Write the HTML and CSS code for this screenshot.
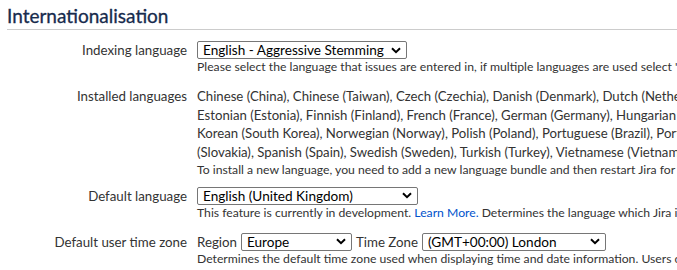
FILE: index.html
```html
<!DOCTYPE html>
<html lang="en">
<head>
<meta charset="utf-8">
<title>Internationalisation</title>
<link rel="stylesheet" href="styles.css">
</head>
<body>
<div class="page">
  <h2 class="section-title">Internationalisation</h2>
  <div class="form">
    <div class="row">
      <label class="label">Indexing language</label>
      <div class="field">
        <select class="select select-index"><option>English - Aggressive Stemming</option></select>
        <div class="desc">Please select the language that issues are entered in, if multiple languages are used select 'Other' to disable language specific stemming</div>
      </div>
    </div>
    <div class="row row-list">
      <div class="label">Installed languages</div>
      <div class="field">
        <div class="langs">Chinese (China), Chinese (Taiwan), Czech (Czechia), Danish (Denmark), Dutch (Netherlands), English (United Kingdom), English (United States),<br>Estonian (Estonia), Finnish (Finland), French (France), German (Germany), Hungarian (Hungary), Icelandic (Iceland), Italian (Italy), Japanese (Japan),<br>Korean (South Korea), Norwegian (Norway), Polish (Poland), Portuguese (Brazil), Portuguese (Portugal), Romanian (Romania), Russian (Russia), Slovak<br>(Slovakia), Spanish (Spain), Swedish (Sweden), Turkish (Turkey), Vietnamese (Vietnam)</div>
        <div class="desc">To install a new language, you need to add a new language bundle and then restart Jira for the changes to take effect.</div>
      </div>
    </div>
    <div class="row">
      <label class="label">Default language</label>
      <div class="field">
        <select class="select select-lang"><option>English (United Kingdom)</option></select>
        <div class="desc">This feature is currently in development. <a class="link" href="#">Learn More.</a> Determines the language which Jira is displayed in when a user has not set a language preference.</div>
      </div>
    </div>
    <div class="row">
      <div class="label">Default user time zone</div>
      <div class="field">
        <div class="tz">
          <span class="tz-label">Region</span>
          <select class="select select-region"><option>Europe</option></select>
          <span class="tz-label">Time Zone</span>
          <select class="select select-zone"><option>(GMT+00:00) London</option></select>
        </div>
        <div class="desc">Determines the default time zone used when displaying time and date information. Users can override this setting in their profile.</div>
      </div>
    </div>
  </div>
</div>
</body>
</html>
```
FILE: styles.css
```css
html, body {
  margin: 0;
  padding: 0;
  background: #fff;
  overflow: hidden;
}
body {
  font-family: Lato, "Open Sans", sans-serif;
  color: #333;
}
.page {
  width: 1100px;
  padding-left: 7px;
}
.section-title {
  margin: 0;
  padding: 6px 0 3px;
  font-size: 19px;
  line-height: 20px;
  font-weight: 400;
  color: #172b4d;
  border-bottom: 1px solid #ccc;
  -webkit-text-stroke: 0.3px #172b4d;
}
.form {
  padding-top: 11px;
}
.row {
  display: grid;
  grid-template-columns: 180px 1fr;
  column-gap: 10px;
  margin-bottom: 12px;
}
.row-list {
  margin-bottom: 9px;
}
.label {
  text-align: right;
  font-size: 13.3px;
  line-height: 18px;
  color: #333;
  white-space: nowrap;
}
.row-list .label {
  line-height: 18.67px;
}
.field {
  min-width: 0;
}
.langs {
  font-size: 13.2px;
  line-height: 18.67px;
  white-space: nowrap;
}
.desc {
  font-size: 12.2px;
  line-height: 16px;
  color: #333;
  white-space: nowrap;
}
.link {
  color: #0052cc;
  text-decoration: none;
}
.select {
  -webkit-appearance: none;
  appearance: none;
  display: block;
  height: 18px;
  box-sizing: border-box;
  margin: 0;
  padding: 0 18px 0 5px;
  border: 1px solid #767676;
  border-radius: 2px;
  background: #fff url("data:image/svg+xml,%3Csvg xmlns='http://www.w3.org/2000/svg' width='10' height='7' viewBox='0 0 10 7'%3E%3Cpath d='M1 1.2 L5 5.2 L9 1.2' fill='none' stroke='%23000' stroke-width='2'/%3E%3C/svg%3E") no-repeat right 5px center;
  font-family: inherit;
  font-size: 13.6px;
  line-height: 16px;
  color: #000;
}
.select-index { width: 210px; }
.select-lang { width: 221px; }
.select-region { width: 111px; }
.select-zone { width: 184px; }
.tz {
  display: flex;
  align-items: center;
  gap: 4px;
}
.tz-label {
  font-size: 13.3px;
  line-height: 18px;
  white-space: nowrap;
}
```
